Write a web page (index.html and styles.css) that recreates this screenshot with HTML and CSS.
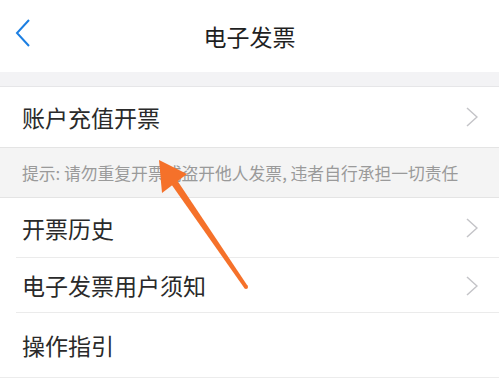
FILE: index.html
```html
<!DOCTYPE html>
<html lang="zh">
<head>
<meta charset="utf-8">
<link rel="stylesheet" href="styles.css">
</head>
<body>
<div class="page">
  <header class="nav">
    <svg class="back" width="16" height="28" viewBox="0 0 16 28"><polyline points="14,1 2,14 14,27" fill="none" stroke="#1c7fe2" stroke-width="2"/></svg>
    <div class="title">电子发票</div>
  </header>
  <div class="gap"></div>
  <div class="row row-first">
    <span class="label">账户充值开票</span>
    <svg class="chev" width="12" height="20" viewBox="0 0 12 20"><polyline points="1,1 11,10 1,19" fill="none" stroke="#c4c4c8" stroke-width="1.5"/></svg>
  </div>
  <div class="hint">提示: 请勿重复开票或盗开他人发票, 违者自行承担一切责任</div>
  <div class="row row-2 inset">
    <span class="label">开票历史</span>
    <svg class="chev" width="12" height="20" viewBox="0 0 12 20"><polyline points="1,1 11,10 1,19" fill="none" stroke="#c4c4c8" stroke-width="1.5"/></svg>
  </div>
  <div class="row row-3 inset">
    <span class="label">电子发票用户须知</span>
    <svg class="chev" width="12" height="20" viewBox="0 0 12 20"><polyline points="1,1 11,10 1,19" fill="none" stroke="#c4c4c8" stroke-width="1.5"/></svg>
  </div>
  <div class="row row-4 last">
    <span class="label">操作指引</span>
  </div>
  <svg class="arrow" width="499" height="379" viewBox="0 0 499 379">
    <polygon points="176.9,180 171.1,184 244.3,288.1 247.7,285.9" fill="#f5712a"/>
    <circle cx="246" cy="287" r="2" fill="#f5712a"/>
    <polygon points="159,160 187,174 162,193" fill="#f5712a"/>
  </svg>
</div>
</body>
</html>
```

FILE: styles.css
```css
* { box-sizing: border-box; }
html, body { margin: 0; padding: 0; background: #fff; }
body {
  font-family: "Noto Sans CJK SC", "Noto Sans", sans-serif;
  width: 499px;
  height: 379px;
  overflow: hidden;
}
.page { position: relative; width: 499px; height: 379px; }
.nav {
  height: 72px;
  display: flex;
  align-items: center;
  justify-content: center;
  position: relative;
}
.back { position: absolute; left: 15px; top: 19px; }
.title { font-size: 23px; color: #1f1f1f; letter-spacing: 0; margin-top: -1px; }
.gap {
  height: 15px;
  background: #f3f3f5;
  border-bottom: 1px solid #e6e6e8;
}
.row {
  display: flex;
  align-items: center;
  justify-content: space-between;
  padding: 0 21px 0 22px;
  background: #fff;
  position: relative;
}
.label { font-size: 23px; color: #2a2a2a; line-height: 1; }
.row-first { height: 60px; }
.row-2 { height: 60px; }
.row-3 { height: 55px; }
.row-4 { height: 65px; border-bottom: 1px solid #ececec; }
.inset::after {
  content: "";
  position: absolute;
  left: 16px; right: 0; bottom: 0;
  height: 1px;
  background: #ebebeb;
}
.hint {
  height: 51px;
  background: #f4f4f4;
  border-top: 1px solid #e4e4e4;
  border-bottom: 1px solid #e4e4e4;
  padding-left: 22px;
  display: flex;
  align-items: center;
  font-size: 16.8px;
  color: #9a9a9a;
}
.arrow { position: absolute; left: 0; top: 0; pointer-events: none; }
```
